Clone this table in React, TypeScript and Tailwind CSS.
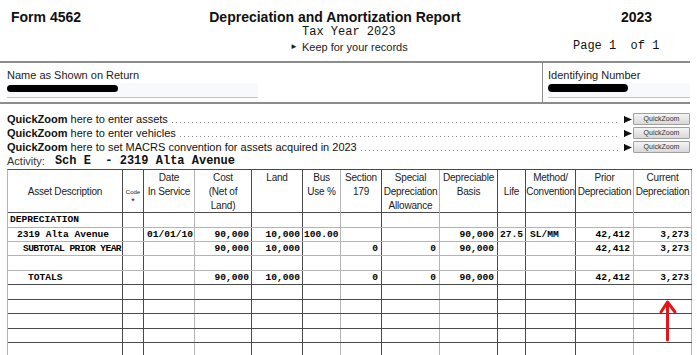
const colW = 'grid grid-cols-[115px_21px_51px_57px_51px_38px_41px_58px_58px_28px_50px_58px_58px]';

// right border colour of every column
const vline = [
  'border-[#4a4a4a]',
  'border-[#4a4a4a]',
  'border-[#b4b4b4]',
  'border-[#4a4a4a]',
  'border-[#4a4a4a]',
  'border-[#b4b4b4]',
  'border-[#4a4a4a]',
  'border-[#b4b4b4]',
  'border-[#4a4a4a]',
  'border-[#4a4a4a]',
  'border-[#4a4a4a]',
  'border-[#b4b4b4]',
  'border-[#b4b4b4]',
];

// alignment of data cells
const align = [
  'justify-start',
  'justify-center',
  'justify-start pl-[3px]',
  'justify-end pr-[2px]',
  'justify-end pr-[2px]',
  'justify-start pl-[1px]',
  'justify-end pr-[3px]',
  'justify-end pr-[3px]',
  'justify-end pr-[3px]',
  'justify-start pl-[2px]',
  'justify-start pl-[4px]',
  'justify-end pr-[3px]',
  'justify-end pr-[2px]',
];

type Row = { cells: string[]; indent: string; h: string; line: string };

const blank = ['', '', '', '', '', '', '', '', '', '', '', '', ''];

const rows: Row[] = [
  { cells: ['DEPRECIATION', '', '', '', '', '', '', '', '', '', '', '', ''], indent: 'pl-[2px]', h: 'h-[15px]', line: 'border-[#b4b4b4]' },
  { cells: ['2319 Alta Avenue', '', '01/01/10', '90,000', '10,000', '100.00', '', '', '90,000', '27.5', 'SL/MM', '42,412', '3,273'], indent: 'pl-[9px]', h: 'h-[14px]', line: 'border-[#b4b4b4]' },
  { cells: ['SUBTOTAL PRIOR YEAR', '', '', '90,000', '10,000', '', '0', '0', '90,000', '', '', '42,412', '3,273'], indent: 'pl-[15px] tracking-[-0.6px]', h: 'h-[14px]', line: 'border-[#b4b4b4]' },
  { cells: blank, indent: '', h: 'h-[15px]', line: 'border-[#b4b4b4]' },
  { cells: ['TOTALS', '', '', '90,000', '10,000', '', '0', '0', '90,000', '', '', '42,412', '3,273'], indent: 'pl-[20px]', h: 'h-[14px]', line: 'border-[#4a4a4a]' },
  { cells: blank, indent: '', h: 'h-[15px]', line: 'border-[#4a4a4a]' },
  { cells: blank, indent: '', h: 'h-[14px]', line: 'border-[#4a4a4a]' },
  { cells: blank, indent: '', h: 'h-[15px]', line: 'border-[#4a4a4a]' },
  { cells: blank, indent: '', h: 'h-[14px]', line: 'border-[#4a4a4a]' },
  { cells: blank, indent: '', h: 'h-[14px]', line: 'border-[#4a4a4a]' },
];

const quickZoom = [
  'here to enter assets',
  'here to enter vehicles',
  'here to set MACRS convention for assets acquired in 2023',
];

const mono = "font-['Liberation_Mono','Courier_New',monospace]";

function Pointer() {
  return (
    <svg width="8" height="7" viewBox="0 0 8 7" className="shrink-0">
      <rect x="0" y="0" width="1" height="7" fill="#111" />
      <polygon points="1,0.5 8,3.5 1,6.5" fill="#111" />
    </svg>
  );
}

function HeaderCell({ i, children, center }: { i: number; children: React.ReactNode; center?: boolean }) {
  return (
    <div
      className={`border-r ${vline[i]} flex flex-col items-center text-center ${center ? 'justify-center' : 'justify-start pt-[1px]'}`}
    >
      {children}
    </div>
  );
}

export default function App() {
  return (
    <div className="relative w-[697px] h-[355px] overflow-hidden bg-white text-[#111] font-['Liberation_Sans',Arial,sans-serif]">
      {/* Title block */}
      <div className="flex h-[63px] w-[690px] border-b-2 border-[#8c8c8c]">
        <div className="w-[200px] pl-[11px] pt-[9px] text-[14px] leading-[16px] font-bold">Form 4562</div>
        <div className="w-[270px] pt-[9px]">
          <div className="text-center text-[14px] leading-[16px] font-bold">Depreciation and Amortization Report</div>
          <div className={`pl-[102px] text-[12px] leading-[14px] ${mono}`}>Tax Year 2023</div>
          <div className="pl-[90px] mt-[1px] flex items-center gap-[4px] text-[11px] leading-[14px] text-[#222]">
            <span className="text-[8px]">►</span>
            <span>Keep for your records</span>
          </div>
        </div>
        <div className="flex-1 pt-[9px]">
          <div className="pl-[151px] text-[14px] leading-[16px] font-bold">2023</div>
          <div className={`pl-[103px] mt-[14px] text-[12px] leading-[14px] whitespace-pre ${mono}`}>Page 1  of 1</div>
        </div>
      </div>

      {/* Name / identifying number */}
      <div className="flex h-[41px] w-[690px] border-b-2 border-[#8c8c8c]">
        <div className="w-[543px] border-r border-[#8c8c8c] pl-[7px] pt-[6px]">
          <div className="text-[11px] leading-[13px] text-[#222]">Name as Shown on Return</div>
          <div className="mt-[1px] h-[15px] w-[251px] bg-[#f8f9fc] border-b border-[#c4c4c4] pt-[2px]">
            <div className="h-[7px] w-[111px] rounded-full bg-black" />
          </div>
        </div>
        <div className="flex-1 pl-[5px] pt-[6px]">
          <div className="text-[11px] leading-[13px] text-[#222]">Identifying Number</div>
          <div className="mt-[1px] h-[15px] bg-[#f8f9fc] border-b border-[#c4c4c4] pt-[1px]">
            <div className="h-[8px] w-[80px] rounded-full bg-black" />
          </div>
        </div>
      </div>

      {/* QuickZoom links */}
      <div className="pt-[8px] w-[690px]">
        {quickZoom.map((t) => (
          <div key={t} className="flex h-[14px] items-center pl-[7px] text-[11px] leading-[14px]">
            <span className="whitespace-nowrap">
              <b>QuickZoom</b> {t}
            </span>
            <span className="ml-[4px] mr-[5px] mt-[7px] h-[1px] flex-1 bg-[linear-gradient(to_right,#8a8a9a_1px,transparent_1px)] bg-[length:4px_1px] bg-repeat-x" />
            <Pointer />
            <button className="ml-[1px] h-[12px] w-[57px] shrink-0 rounded-[1px] border border-[#a0a0a0] bg-gradient-to-b from-[#f4f4f4] to-[#d8d8d8] text-[7px] leading-[10px] text-[#333]">
              QuickZoom
            </button>
          </div>
        ))}
        <div className="flex h-[14px] items-center pl-[7px]">
          <span className="text-[11px] text-[#333]">Activity:</span>
          <span className={`ml-[10px] text-[12px] font-bold whitespace-pre ${mono}`}>Sch E  - 2319 Alta Avenue</span>
        </div>
      </div>

      {/* Asset table */}
      <div className="ml-[7px] mt-[1px] w-fit border-l border-t border-l-[#b4b4b4] border-t-[#4a4a4a]">
        <div className={`${colW} h-[43px] border-b border-[#4a4a4a] text-[10px] leading-[14px] tracking-[-0.2px] text-[#222]`}>
          <HeaderCell i={0} center>Asset Description</HeaderCell>
          <HeaderCell i={1}>
            <span className="mt-[17px] text-[6px] leading-[8px] tracking-normal">Code</span>
            <span className="text-[9px] leading-[10px]">*</span>
          </HeaderCell>
          <HeaderCell i={2}><span>Date</span><span>In Service</span></HeaderCell>
          <HeaderCell i={3}><span>Cost</span><span>(Net of</span><span>Land)</span></HeaderCell>
          <HeaderCell i={4}><span>Land</span></HeaderCell>
          <HeaderCell i={5}><span>Bus</span><span>Use %</span></HeaderCell>
          <HeaderCell i={6}><span>Section</span><span>179</span></HeaderCell>
          <HeaderCell i={7}><span>Special</span><span>Depreciation</span><span>Allowance</span></HeaderCell>
          <HeaderCell i={8}><span>Depreciable</span><span>Basis</span></HeaderCell>
          <HeaderCell i={9} center>Life</HeaderCell>
          <HeaderCell i={10}><span>Method/</span><span>Convention</span></HeaderCell>
          <HeaderCell i={11}><span>Prior</span><span>Depreciation</span></HeaderCell>
          <HeaderCell i={12}><span>Current</span><span>Depreciation</span></HeaderCell>
        </div>

        {rows.map((r, ri) => (
          <div key={ri} className={`${colW} ${r.h} border-b ${r.line} text-[9.6px] leading-[12px] font-bold text-black ${mono}`}>
            {r.cells.map((c, ci) => (
              <div
                key={ci}
                className={`flex items-center whitespace-pre overflow-visible border-r ${vline[ci]} ${ci === 0 ? r.indent : align[ci]}`}
              >
                {c}
              </div>
            ))}
          </div>
        ))}
      </div>

      {/* red annotation arrow */}
      <svg className="absolute left-[655px] top-[296px]" width="26" height="50" viewBox="655 296 26 50">
        <path d="M661 312 L667.5 302 L675 312" fill="none" stroke="#e2151b" strokeWidth="3" strokeLinecap="round" strokeLinejoin="round" />
        <path d="M667.5 303 L667.5 340" fill="none" stroke="#e2151b" strokeWidth="3" strokeLinecap="round" />
      </svg>
    </div>
  );
}
